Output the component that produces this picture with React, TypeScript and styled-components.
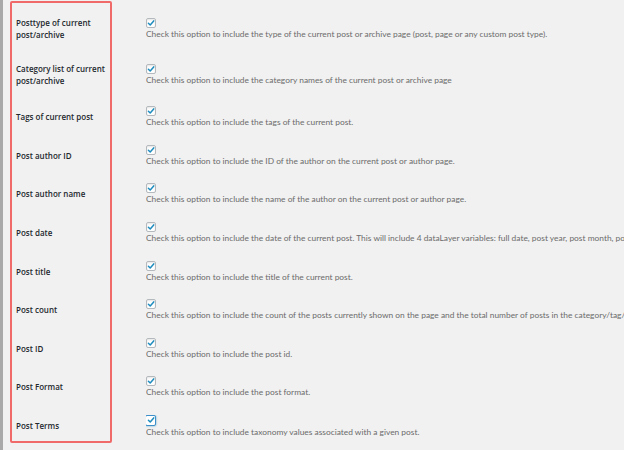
import React from "react";
import styled, { createGlobalStyle } from "styled-components";

const GlobalStyle = createGlobalStyle`
  html, body { margin: 0; padding: 0; background: #f1f1f1; }
  body { width: 624px; height: 450px; overflow: hidden; }
`;

const Page = styled.div`
  display: flex;
  width: 624px;
  height: 450px;
  overflow: hidden;
  background: #f1f1f1;
`;

const EdgeBar = styled.div`
  flex: 0 0 3px;
  background: #a9a9a9;
`;

const Table = styled.div`
  position: relative;
  flex: 1;
  display: flex;
  flex-direction: column;
  padding: 6px 0 0 13px;
  min-width: 0;
`;

const Row = styled.div<{ $h: number }>`
  display: flex;
  align-items: center;
  height: ${(p) => p.$h}px;
  flex: 0 0 auto;
`;

const Label = styled.div`
  flex: 0 0 130px;
  font-family: "Open Sans", "Noto Sans", sans-serif;
  font-weight: 600;
  font-size: 8px;
  line-height: 12px;
  color: #23282d;
  padding-right: 8px;
  box-sizing: border-box;
`;

const Field = styled.div`
  flex: 1;
  min-width: 0;
  display: flex;
  flex-direction: column;
  align-items: flex-start;
  white-space: nowrap;
  overflow: hidden;
`;

const Box = styled.span<{ $focus?: boolean }>`
  display: inline-flex;
  align-items: center;
  justify-content: center;
  box-sizing: border-box;
  width: ${(p) => (p.$focus ? "11px" : "10px")};
  height: ${(p) => (p.$focus ? "11px" : "10px")};
  margin-left: ${(p) => (p.$focus ? "-1px" : "0")};
  background: #fff;
  border: ${(p) => (p.$focus ? "1.5px solid #3d8fc9" : "1px solid #b4b9be")};
  border-radius: 2px;
  box-shadow: ${(p) =>
    p.$focus ? "0 0 2px rgba(30,140,190,0.8)" : "inset 0 1px 2px rgba(0,0,0,0.1)"};
`;

const Desc = styled.div`
  font-family: "Lato", "Open Sans", sans-serif;
  font-size: 8.4px;
  line-height: 11px;
  color: #6b6b6b;
  margin-top: 1px;
`;

const Highlight = styled.div`
  position: absolute;
  left: 7px;
  top: 1px;
  width: 102px;
  height: 442px;
  box-sizing: border-box;
  border: 2px solid #f06a6a;
  border-radius: 2px;
  pointer-events: none;
`;

const Check = ({ focus }: { focus?: boolean }) => (
  <Box $focus={focus}>
    <svg width="8" height="8" viewBox="0 0 8 8">
      <path
        d="M1.4 4.2 L3.2 6 L6.7 1.9"
        fill="none"
        stroke="#1e8cbe"
        strokeWidth="1.5"
        strokeLinecap="round"
        strokeLinejoin="round"
      />
    </svg>
  </Box>
);

const rows: { label: React.ReactNode; desc: string; h: number; focus?: boolean }[] = [
  {
    label: (
      <>
        Posttype of current
        <br />
        post/archive
      </>
    ),
    desc: "Check this option to include the type of the current post or archive page (post, page or any custom post type).",
    h: 46,
  },
  {
    label: (
      <>
        Category list of current
        <br />
        post/archive
      </>
    ),
    desc: "Check this option to include the category names of the current post or archive page",
    h: 46,
  },
  { label: "Tags of current post", desc: "Check this option to include the tags of the current post.", h: 38.6 },
  { label: "Post author ID", desc: "Check this option to include the ID of the author on the current post or author page.", h: 38.6 },
  { label: "Post author name", desc: "Check this option to include the name of the author on the current post or author page.", h: 38.6 },
  {
    label: "Post date",
    desc: "Check this option to include the date of the current post. This will include 4 dataLayer variables: full date, post year, post month, post date.",
    h: 38.6,
  },
  { label: "Post title", desc: "Check this option to include the title of the current post.", h: 38.6 },
  {
    label: "Post count",
    desc: "Check this option to include the count of the posts currently shown on the page and the total number of posts in the category/tag/taxonomy.",
    h: 38.6,
  },
  { label: "Post ID", desc: "Check this option to include the post id.", h: 38.6 },
  { label: "Post Format", desc: "Check this option to include the post format.", h: 38.6 },
  { label: "Post Terms", desc: "Check this option to include taxonomy values associated with a given post.", h: 38.6, focus: true },
];

export default function App() {
  return (
    <>
      <GlobalStyle />
      <Page>
        <EdgeBar />
        <Table>
          {rows.map((r, i) => (
            <Row key={i} $h={r.h}>
              <Label>{r.label}</Label>
              <Field>
                <Check focus={r.focus} />
                <Desc>{r.desc}</Desc>
              </Field>
            </Row>
          ))}
          <Highlight />
        </Table>
      </Page>
    </>
  );
}
